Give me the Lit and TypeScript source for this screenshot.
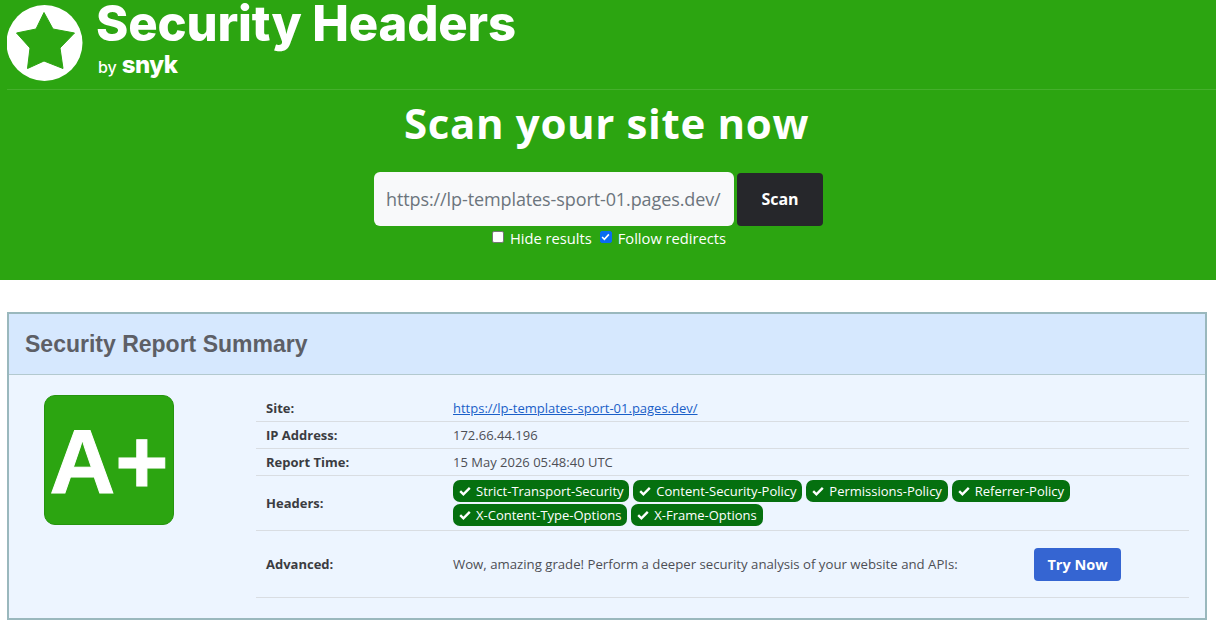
import { LitElement, html, css } from "lit";
import { customElement } from "lit/decorators.js";

const check = html`<svg class="chk" viewBox="0 0 12 10"><path d="M1.2 5.2 4.400 8.300 10.800 1.800" fill="none" stroke="#fff" stroke-width="2.400"/></svg>`;
const pills1 = ["Strict-Transport-Security", "Content-Security-Policy", "Permissions-Policy", "Referrer-Policy"];
const pills2 = ["X-Content-Type-Options", "X-Frame-Options"];

@customElement("app-root")
export class AppRoot extends LitElement {
  static styles = css`
    :host { display: block; width: 1216px; height: 629px; overflow: hidden; background: #fff; font-family: "Open Sans", sans-serif; color: #333; }
    * { box-sizing: border-box; }
    .top { height: 280px; background: #2ca511; padding: 0 0 0 7px; display: flex; flex-direction: column; align-items: stretch; color: #fff; }
    .brand { height: 90px; border-bottom: 1px solid #45b02c; display: flex; align-items: flex-start; gap: 13px; }
    .logo { width: 76px; height: 76px; flex: none; margin-top: 5px; }
    .names { display: flex; flex-direction: column; }
    .name { font-family: "Inter", sans-serif; font-weight: 800; font-size: 49px; line-height: 48px; letter-spacing: -0.15px; white-space: nowrap; }
    .by { display: flex; align-items: baseline; gap: 5px; margin: 4px 0 0 2px; font-family: "Inter", sans-serif; line-height: 26px; }
    .by span { font-size: 16px; font-weight: 500; }
    .by b { font-size: 24px; font-weight: 800; letter-spacing: -0.5px; }
    .scan { display: flex; flex-direction: column; align-items: center; padding-right: 10px; }
    h1 { margin: 8px 0 0; font-size: 42px; line-height: 50px; font-weight: 700; letter-spacing: 0.65px; }
    .form { display: flex; margin: 24px 16px 0 0; gap: 3px; align-items: center; }
    .input { width: 360px; height: 54px; background: #f8f9fa; border-radius: 6px; color: #6c757d; font-size: 18px; display: flex; align-items: center; padding-left: 12px; white-space: nowrap; letter-spacing: -0.1px; }
    .go { width: 86px; height: 53px; background: #26272b; border-radius: 4px; color: #fff; font-weight: 700; font-size: 16px; display: flex; align-items: center; justify-content: center; }
    .opts { display: flex; align-items: center; font-size: 14.7px; line-height: 20px; margin: 2px 0 0 5px; }
    .box { width: 12px; height: 12px; border-radius: 2px; background: #fff; border: 1px solid #767676; margin-right: 6px; display: flex; align-items: center; justify-content: center; position: relative; top: -1px; }
    .box.on { background: #0a6cf0; border-color: #0a6cf0; }
    .box svg { width: 9px; height: 8px; }
    .opts .sp { margin-right: 8px; }
    .card { margin: 32px 9px 0 7px; height: 308px; border: 2px solid #9ab8bd; background: #edf5ff; }
    .head { height: 61px; background: #d6e8fe; border-bottom: 1px solid #b3c9cf; padding-left: 16px; display: flex; align-items: center; font-family: "Liberation Sans", sans-serif; font-weight: 700; font-size: 23px; color: #5d5f66; }
    .body { display: flex; padding: 20px 16px 0 35px; }
    .grade { width: 130px; height: 130px; flex: none; background: #2ca511; border: 1px solid #26950f; border-radius: 11px; color: #fff; font-family: "Liberation Sans", sans-serif; font-weight: 700; font-size: 91px; line-height: 131px; text-align: center; overflow: hidden; -webkit-text-stroke: 1px #fff; }
    .table { margin-left: 82px; flex: 1; font-size: 13px; color: #4d4f55; }
    .row { display: grid; grid-template-columns: 187px 1fr; align-items: center; border-bottom: 1px solid #d9dde2; height: 27px; padding-left: 10px; }
    .row.pills { height: 55px; }
    .row.adv { height: 67px; }
    .k { font-weight: 700; color: #3b3c41; }
    a { color: #1a5fc8; text-decoration: underline; }
    .wrap { display: flex; flex-direction: column; gap: 2px; }
    .line { display: flex; gap: 4px; }
    .pill { height: 22px; background: #05700f; color: #fff; border-radius: 7px; display: flex; align-items: center; padding: 0 5.8px 0 6px; gap: 5px; font-size: 13px; white-space: nowrap; }
    .chk { width: 12px; height: 10px; flex: none; }
    .advc { display: flex; align-items: center; }
    .advc span { width: 581px; font-size: 13.2px; white-space: nowrap; }
    .try { width: 87px; height: 33px; background: #3565d2; color: #fff; border-radius: 4px; font-weight: 700; font-size: 14.5px; display: flex; align-items: center; justify-content: center; }
  `;

  render() {
    return html`
      <div class="top">
        <div class="brand">
          <svg class="logo" viewBox="0 0 76 76">
            <circle cx="37.500" cy="38" r="38" fill="#fff"/>
            <path d="M37 7.500 46 24 67.500 28 53 43 56 63.500 37 56 20.500 63.500 23 43 9.500 28 29 24z" fill="#2ca511" stroke="#2ca511" stroke-width="1" stroke-linejoin="round"/>
          </svg>
          <div class="names">
            <div class="name">Security Headers</div>
            <div class="by"><span>by</span><b>snyk</b></div>
          </div>
        </div>
        <div class="scan">
          <h1>Scan your site now</h1>
          <div class="form">
            <div class="input">https://lp-templates-sport-01.pages.dev/</div>
            <div class="go">Scan</div>
          </div>
          <div class="opts">
            <span class="box"></span><span class="sp">Hide results</span>
            <span class="box on"><svg viewBox="0 0 12 10"><path d="M1.500 5 4.500 8 10.500 1.500" fill="none" stroke="#fff" stroke-width="2.200"/></svg></span><span>Follow redirects</span>
          </div>
        </div>
      </div>
      <div class="card">
        <div class="head">Security Report Summary</div>
        <div class="body">
          <div class="grade">A+</div>
          <div class="table">
            <div class="row"><div class="k">Site:</div><div><a href="#">https://lp-templates-sport-01.pages.dev/</a></div></div>
            <div class="row"><div class="k">IP Address:</div><div>172.66.44.196</div></div>
            <div class="row"><div class="k">Report Time:</div><div>15 May 2026 05:48:40 UTC</div></div>
            <div class="row pills"><div class="k">Headers:</div>
              <div class="wrap">
                <div class="line">${pills1.map((p) => html`<div class="pill">${check}${p}</div>`)}</div>
                <div class="line">${pills2.map((p) => html`<div class="pill">${check}${p}</div>`)}</div>
              </div>
            </div>
            <div class="row adv"><div class="k">Advanced:</div>
              <div class="advc"><span>Wow, amazing grade! Perform a deeper security analysis of your website and APIs:</span><div class="try">Try Now</div></div>
            </div>
          </div>
        </div>
      </div>
    `;
  }
}
